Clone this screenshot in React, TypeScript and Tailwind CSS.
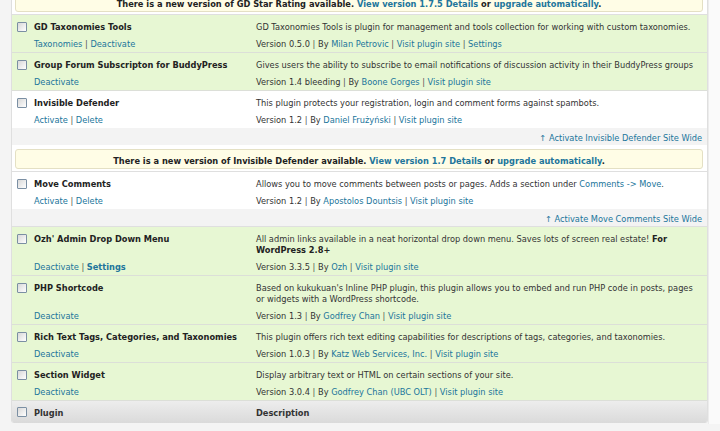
import type { ReactNode } from "react";

type Plugin = {
  name: string;
  active: boolean;
  actions: ReactNode;
  desc: ReactNode;
  version: string;
  author: string;
  extra?: ReactNode;
  border?: boolean;
};

const link = "text-[#21759b]";

function Sep() {
  return <span className="text-[#555]"> | </span>;
}

function Checkbox() {
  return (
    <span className="block w-[10px] h-[10px] rounded-[1px] border border-[#7b8fa3] bg-gradient-to-br from-[#d8d8d8] to-white" />
  );
}

function PluginRow({ p }: { p: Plugin }) {
  return (
    <div
      className={`grid grid-cols-[22px_222px_1fr] ${
        p.active ? "bg-[#e7f7d3]" : "bg-white"
      } ${p.border === false ? "" : "border-b border-[#dcdfd8]"}`}
    >
      <div className="row-span-2 pt-[7px] pl-[5px]">
        <Checkbox />
      </div>
      <div className="pt-[7px] font-bold text-[#222] whitespace-nowrap">{p.name}</div>
      <div className="pt-[7px] whitespace-nowrap">{p.desc}</div>
      <div className="pt-[6px] pb-[2px] whitespace-nowrap">{p.actions}</div>
      <div className="pt-[6px] pb-[2px] whitespace-nowrap">
        Version {p.version}
        <Sep />
        By <a className={link}>{p.author}</a>
        <Sep />
        <a className={link}>Visit plugin site</a>
        {p.extra}
      </div>
    </div>
  );
}

function SiteWide({ name }: { name: string }) {
  return (
    <div className="h-[17px] overflow-hidden bg-[#f3f3f3] text-right pr-[5px] leading-[20px]">
      <a className={link}>↑ Activate {name} Site Wide</a>
    </div>
  );
}

function Notice({ name, version, first }: { name: string; version: string; first?: boolean }) {
  return (
    <div
      className={`bg-white pl-[3px] pr-[4px] pt-[4px] pb-[2px] border-b border-[#dfdfdf] ${
        first ? "-mt-[12px]" : ""
      }`}
    >
      <div className="h-[20px] overflow-hidden pt-[2px] leading-[18px] text-center rounded-[3px] border border-[#e4e0c4] bg-[#fffde6] font-bold text-[#222] whitespace-nowrap">
        There is a new version of {name} available.{" "}
        <a className={link}>View version {version} Details</a> or{" "}
        <a className={link}>upgrade automatically</a>.
      </div>
    </div>
  );
}

const deactivate = <a className={link}>Deactivate</a>;
const activateDelete = (
  <>
    <a className={link}>Activate</a>
    <Sep />
    <a className={link}>Delete</a>
  </>
);

export default function App() {
  return (
    <div className="h-[431px] w-[720px] overflow-hidden bg-[#f4f4f4] flex items-start pl-[11px] font-['DejaVu_Sans',Verdana,sans-serif] text-[8.25px] leading-[11px] text-[#333]">
      <div className="w-[697px] shrink-0 border-x border-[#dfdfdf] bg-white rounded-b-[3px] overflow-hidden">
        <Notice first name="GD Star Rating" version="1.7.5" />
        <PluginRow
          p={{
            name: "GD Taxonomies Tools",
            active: true,
            actions: (
              <>
                <a className={link}>Taxonomies</a>
                <Sep />
                {deactivate}
              </>
            ),
            desc: "GD Taxonomies Tools is plugin for management and tools collection for working with custom taxonomies.",
            version: "0.5.0",
            author: "Milan Petrovic",
            extra: (
              <>
                <Sep />
                <a className={link}>Settings</a>
              </>
            ),
          }}
        />
        <PluginRow
          p={{
            name: "Group Forum Subscripton for BuddyPress",
            active: true,
            actions: deactivate,
            desc: "Gives users the ability to subscribe to email notifications of discussion activity in their BuddyPress groups",
            version: "1.4 bleeding",
            author: "Boone Gorges",
          }}
        />
        <PluginRow
          p={{
            name: "Invisible Defender",
            active: false,
            border: false,
            actions: activateDelete,
            desc: "This plugin protects your registration, login and comment forms against spambots.",
            version: "1.2",
            author: "Daniel Frużyński",
          }}
        />
        <SiteWide name="Invisible Defender" />
        <Notice name="Invisible Defender" version="1.7" />
        <PluginRow
          p={{
            name: "Move Comments",
            active: false,
            border: false,
            actions: activateDelete,
            desc: (
              <>
                Allows you to move comments between posts or pages. Adds a section under{" "}
                <a className={link}>Comments -&gt; Move</a>.
              </>
            ),
            version: "1.2",
            author: "Apostolos Dountsis",
          }}
        />
        <div className="border-b border-[#dfdfdf]">
          <SiteWide name="Move Comments" />
        </div>
        <PluginRow
          p={{
            name: "Ozh' Admin Drop Down Menu",
            active: true,
            actions: (
              <>
                {deactivate}
                <Sep />
                <a className={`${link} font-bold`}>Settings</a>
              </>
            ),
            desc: (
              <>
                All admin links available in a neat horizontal drop down menu. Saves lots of screen real estate!{" "}
                <b className="text-[#222]">For</b>
                <br />
                <b className="text-[#222]">WordPress 2.8+</b>
              </>
            ),
            version: "3.3.5",
            author: "Ozh",
          }}
        />
        <PluginRow
          p={{
            name: "PHP Shortcode",
            active: true,
            actions: deactivate,
            desc: (
              <>
                Based on kukukuan's Inline PHP plugin, this plugin allows you to embed and run PHP code in posts, pages
                <br />
                or widgets with a WordPress shortcode.
              </>
            ),
            version: "1.3",
            author: "Godfrey Chan",
          }}
        />
        <PluginRow
          p={{
            name: "Rich Text Tags, Categories, and Taxonomies",
            active: true,
            actions: deactivate,
            desc: "This plugin offers rich text editing capabilities for descriptions of tags, categories, and taxonomies.",
            version: "1.0.3",
            author: "Katz Web Services, Inc.",
          }}
        />
        <PluginRow
          p={{
            name: "Section Widget",
            active: true,
            actions: deactivate,
            desc: "Display arbitrary text or HTML on certain sections of your site.",
            version: "3.0.4",
            author: "Godfrey Chan (UBC OLT)",
          }}
        />
        <div className="h-[22px] grid grid-cols-[22px_222px_1fr] items-center bg-gradient-to-b from-[#ededed] to-[#dadada] font-bold text-[#333]">
          <div className="pl-[5px]">
            <Checkbox />
          </div>
          <div className="pt-[2px]">Plugin</div>
          <div className="pt-[2px]">Description</div>
        </div>
      </div>
      <div className="flex-1 self-stretch h-[424px] bg-[#fafafa] border-l border-[#ececec]" />
    </div>
  );
}
